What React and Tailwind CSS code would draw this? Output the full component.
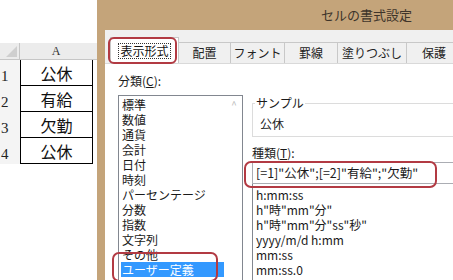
import React from "react";

const rows = [
  { n: "1", v: "公休" },
  { n: "2", v: "有給" },
  { n: "3", v: "欠勤" },
  { n: "4", v: "公休" },
];

const categories = ["標準", "数値", "通貨", "会計", "日付", "時刻", "パーセンテージ", "分数", "指数", "文字列", "その他", "ユーザー定義"];

const formats = ['h:mm:ss', 'h"時"mm"分"', 'h"時"mm"分"ss"秒"', "yyyy/m/d h:mm", "mm:ss", "mm:ss.0"];

const tabs = [
  { label: "配置", cls: "w-[52px]" },
  { label: "フォント", cls: "w-[54px]" },
  { label: "罫線", cls: "w-[53px]" },
  { label: "塗りつぶし", cls: "w-[69px]" },
  { label: "保護", cls: "w-[55px]" },
];

const Sheet = () => (
  <div className="w-[97px] shrink-0 bg-white pt-[43px]">
    <div className="flex h-[17px] border-b border-[#c6c6c6] bg-[#ececec]">
      <div className="relative w-[20px] border-r border-[#c6c6c6]">
        <div className="absolute bottom-[2px] right-[2px] h-0 w-0 border-b-[11px] border-l-[11px] border-b-[#cfcfcf] border-l-transparent" />
      </div>
      <div className="flex w-[72px] items-center justify-center font-['Liberation_Serif'] text-[12px] text-[#333]">A</div>
    </div>
    {rows.map((r) => (
      <div key={r.n} className="flex h-[26px]">
        <div className="flex w-[20px] items-end bg-[#f4f4f4] pb-[1px] pl-[1px] font-['Liberation_Serif'] text-[15px] leading-[18px] text-[#222]">{r.n}</div>
        <div className="flex w-[73px] items-center justify-center border-x border-b border-black text-[16px] text-[#111]">{r.v}</div>
      </div>
    ))}
  </div>
);

const Dialog = () => (
  <div className="flex w-[400px] shrink-0 flex-col bg-[#c4a47a]">
    <div className="flex h-[30px] items-center pl-[224px] text-[13px] text-[#3e342a]">セルの書式設定</div>
    <div className="ml-[8px] flex flex-1 flex-col bg-[#f0f0f0]">
      <div className="flex h-[33px] items-end pl-[5px]">
        <div className="relative flex h-[26px] w-[69px] items-center justify-center border border-b-0 border-[#c8c8c8] bg-white">
          <span className="border border-dotted border-[#333] px-[1px] text-[12px] leading-[14px] text-[#111]">表示形式</span>
          <div className="absolute -left-[3px] -top-[1px] h-[27px] w-[69px] rounded-[6px] border-2 border-[#b23a43]" />
        </div>
        {tabs.map((t) => (
          <div key={t.label} className={`flex h-[21px] items-center justify-center border border-b-0 border-l-0 border-[#c8c8c8] bg-[#f0f0f0] text-[12px] text-[#222] ${t.cls}`}>
            {t.label}
          </div>
        ))}
      </div>
      <div className="flex flex-1 border-t border-[#d9d9d9] bg-white pl-[13px] pt-[8px] text-[12px] text-[#1a1a1a]">
        <div className="flex w-[125px] flex-col">
          <div className="h-[18px] leading-[18px]">分類(<span className="underline">C</span>):</div>
          <div className="mt-[5px] flex flex-1 border border-b-0 border-[#828790]">
            <div className="flex w-[107px] flex-col pt-[1px]">
              {categories.map((c) => (
                <div key={c} className={`relative mx-[2px] h-[15px] px-[1px] leading-[15px] ${c === "ユーザー定義" ? "bg-[#3399ff] text-white" : ""}`}>
                  {c}
                  {c === "ユーザー定義" && (
                    <div className="absolute -left-[9px] -top-[10px] h-[30px] w-[106px] rounded-[7px] border-2 border-[#b23a43]" />
                  )}
                </div>
              ))}
            </div>
            <div className="flex w-[16px] justify-center pt-[4px] text-[10px] leading-[10px] text-[#b9b9b9]">^</div>
          </div>
        </div>
        <div className="ml-[9px] flex flex-1 flex-col pt-[31px]">
          <div className="relative h-[34px] border border-[#dcdcdc] pl-[7px] pt-[13px] leading-[14px]">
            <span className="absolute -top-[9px] left-[2px] bg-white px-[1px] leading-[16px]">サンプル</span>
            公休
          </div>
          <div className="mt-[7px] h-[18px] leading-[18px]">種類(<span className="underline">T</span>):</div>
          <div className="relative h-[22px] border border-[#abadb3] pl-[3px] text-[12.5px] leading-[20px]">
            [=1]"公休";[=2]"有給";"欠勤"
            <div className="absolute -left-[9px] -top-[2px] h-[27px] w-[193px] rounded-[7px] border-2 border-[#b23a43]" />
          </div>
          <div className="flex flex-1 flex-col border-l border-[#828790] pl-[3px] pt-[3px]">
            {formats.map((f) => (
              <div key={f} className="h-[15px] text-[12px] leading-[15px]">{f}</div>
            ))}
          </div>
        </div>
      </div>
    </div>
  </div>
);

export default function App() {
  return (
    <div className="flex h-[280px] w-[453px] overflow-hidden bg-white font-['Noto_Sans_CJK_JP','Noto_Sans',sans-serif]">
      <Sheet />
      <Dialog />
    </div>
  );
}
